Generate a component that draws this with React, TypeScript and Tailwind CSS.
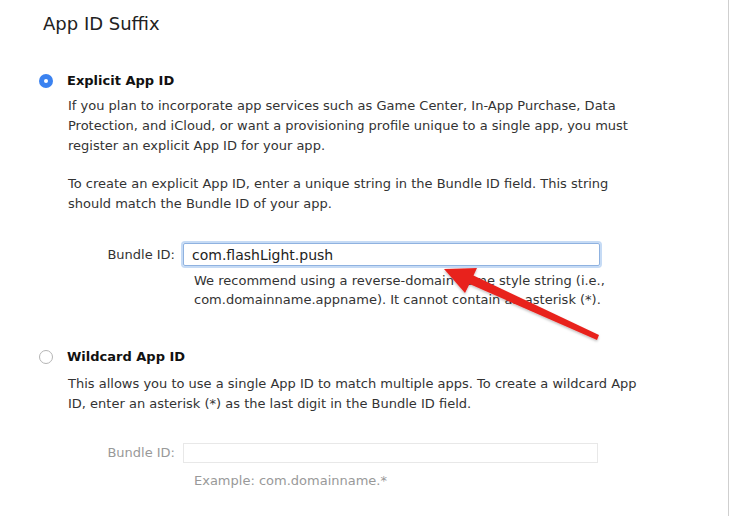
import React from 'react';

const font = { fontFamily: '"Lucida Grande", "DejaVu Sans", sans-serif' };

// Radio button, checked or not
const Radio: React.FC<{ checked?: boolean }> = ({ checked }) => {
  if (checked) {
    return (
      <span className="flex h-[14px] w-[14px] items-center justify-center rounded-full bg-[#3b82f0]">
        <span className="h-[4px] w-[4px] rounded-full bg-white" />
      </span>
    );
  }
  return <span className="h-[14px] w-[14px] rounded-full border border-[#b5b5b5] bg-white" />;
};

const Arrow: React.FC = () => (
  <svg className="absolute left-0 top-0" width="729" height="516" viewBox="0 0 729 516">
    <defs>
      <filter id="sh" x="-10%" y="-10%" width="120%" height="130%">
        <feDropShadow dx="0" dy="1.5" stdDeviation="1" floodColor="#000" floodOpacity="0.25" />
      </filter>
    </defs>
    <polygon
      filter="url(#sh)"
      fill="#e8231f"
      points="444,269 477,268 473.5,275.5 599,335 597,340 469.5,284 465,293"
    />
  </svg>
);

const App: React.FC = () => {
  return (
    <div
      className="relative h-[516px] w-[729px] overflow-hidden border-r border-[#cfcfcf] bg-white text-[#333]"
      style={font}
    >
      <h2 className="pl-[43px] pt-[12px] text-[18px] leading-[24px] text-[#222]">App ID Suffix</h2>

      {/* Explicit */}
      <div className="mt-[35px] flex h-[20px] items-center gap-[14px] pl-[39px]">
        <Radio checked />
        <span className="text-[13px] font-bold text-[#111]">Explicit App ID</span>
      </div>
      <div className="pl-[68px] text-[13px] leading-[20px]">
        <p className="mt-[5px]">
          If you plan to incorporate app services such as Game Center, In-App Purchase, Data
          <br />
          Protection, and iCloud, or want a provisioning profile unique to a single app, you must
          <br />
          register an explicit App ID for your app.
        </p>
        <p className="mt-[18px]">
          To create an explicit App ID, enter a unique string in the Bundle ID field. This string
          <br />
          should match the Bundle ID of your app.
        </p>
        <div className="mt-[29px] flex items-center gap-[8px]">
          <span className="w-[107px] text-right">Bundle ID:</span>
          <div className="flex h-[23px] w-[417px] items-center rounded-[2px] border border-[#8fb2e0] px-[8px] shadow-[0_0_0_2px_#c6dbf5] text-[14px] text-[#222]">
            com.flashLight.push
          </div>
        </div>
        <p className="ml-[126px] mt-[5px] leading-[19px]">
          We recommend using a reverse-domain name style string (i.e.,
          <br />
          com.domainname.appname). It cannot contain an asterisk (*).
        </p>
      </div>

      {/* Wildcard */}
      <div className="mt-[38px] flex h-[20px] items-center gap-[14px] pl-[39px]">
        <Radio />
        <span className="text-[13px] font-bold text-[#111]">Wildcard App ID</span>
      </div>
      <div className="pl-[68px] text-[13px] leading-[20px]">
        <p className="mt-[7px]">
          This allows you to use a single App ID to match multiple apps. To create a wildcard App
          <br />
          ID, enter an asterisk (*) as the last digit in the Bundle ID field.
        </p>
        <div className="mt-[29px] flex items-center gap-[8px] text-[#999]">
          <span className="w-[107px] text-right">Bundle ID:</span>
          <div className="h-[20px] w-[415px] border border-[#e8e8e8]" />
        </div>
        <p className="ml-[126px] mt-[8px] text-[#999]">Example: com.domainname.*</p>
      </div>

      <Arrow />
    </div>
  );
};

export default App;
